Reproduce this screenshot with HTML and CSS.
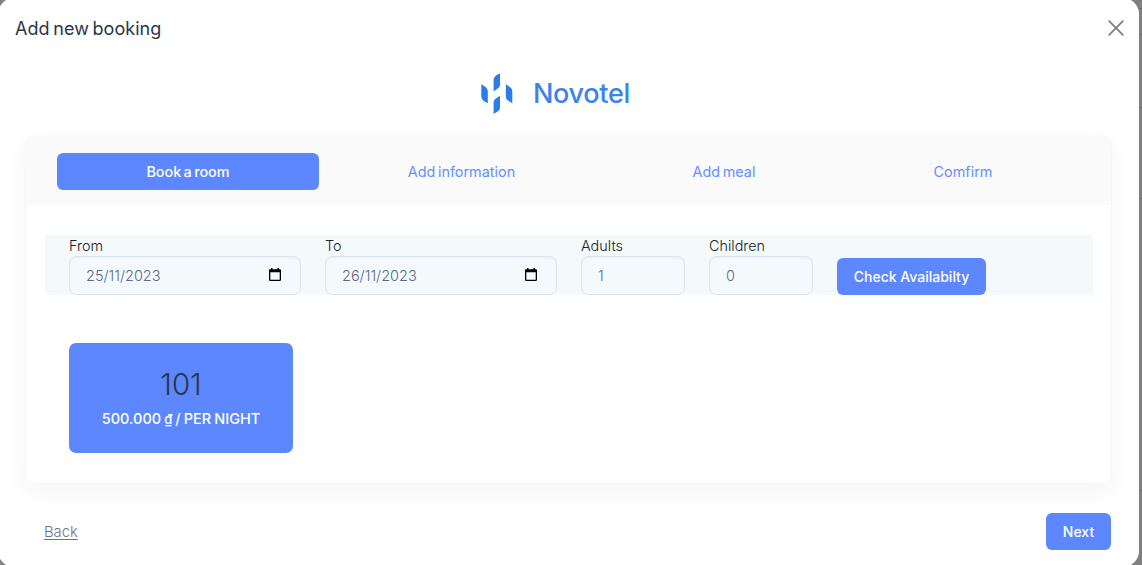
FILE: index.html
```html
<!DOCTYPE html>
<html lang="en">
<head>
<meta charset="utf-8">
<title>Add new booking</title>
<link rel="stylesheet" href="styles.css">
</head>
<body>
<main class="modal">
  <header class="modal-header">
    <h1 class="modal-title">Add new booking</h1>
    <button class="close" aria-label="Close"><svg width="16" height="16" viewBox="0 0 16 16"><path d="M1.2 1.2 14.8 14.8M14.8 1.2 1.2 14.8"/></svg></button>
  </header>
  <div class="brand">
    <svg class="brand-mark" width="32" height="42" viewBox="0 0 32 42"><path d="M0.3 11.2 4.5 13.9Q6.8 15.6 6.8 18V30.2L3 28.2Q.3 26.2.3 23.5ZM12.6 18.4V7.2Q12.6 4.5 15 2.6L19 .2V12Q19 13.8 17.4 15ZM12.6 41V29.5Q12.6 27.2 14.5 25.7L19 22.8V34.5Q19 36.8 17 38.3ZM24.8 11.2 28.6 13.8Q31.3 15.6 31.3 18.5V30.2L27 27.5Q24.8 26 24.8 23.5Z"/></svg>
    <span class="brand-name">Novotel</span>
  </div>
  <section class="card">
    <nav class="tabs">
      <a class="tab tab-room active"><span>Book a room</span></a>
      <a class="tab tab-info"><span>Add information</span></a>
      <a class="tab tab-meal"><span>Add meal</span></a>
      <a class="tab tab-confirm"><span>Comfirm</span></a>
    </nav>
    <div class="card-body">
      <form class="filters">
        <label class="field date"><span class="label">From</span>
          <span class="control"><span class="date-value">25/11/2023</span><svg class="calendar" width="12" height="13" viewBox="0 0 12 13"><path fill-rule="evenodd" d="M2 0H3.5V1.2H8.5V0H10V1.2H10.8Q12 1.2 12 2.3V11.8Q12 13 10.8 13H1.2Q0 13 0 11.8V2.3Q0 1.2 1.2 1.2H2ZM1.3 4.3V11.7H10.7V4.3Z"/></svg></span></label>
        <label class="field date"><span class="label">To</span>
          <span class="control"><span class="date-value">26/11/2023</span><svg class="calendar" width="12" height="13" viewBox="0 0 12 13"><path fill-rule="evenodd" d="M2 0H3.5V1.2H8.5V0H10V1.2H10.8Q12 1.2 12 2.3V11.8Q12 13 10.8 13H1.2Q0 13 0 11.8V2.3Q0 1.2 1.2 1.2H2ZM1.3 4.3V11.7H10.7V4.3Z"/></svg></span></label>
        <label class="field count"><span class="label">Adults</span><span class="control">1</span></label>
        <label class="field count"><span class="label">Children</span><span class="control">0</span></label>
        <button type="button" class="btn check">Check Availabilty</button>
      </form>
      <article class="room">
        <h2 class="room-number">101</h2>
        <p class="room-price">500.000 <span class="currency">₫</span> / PER NIGHT</p>
      </article>
    </div>
  </section>
  <footer class="modal-footer">
    <a class="back">Back</a>
    <button class="btn next">Next</button>
  </footer>
</main>
</body>
</html>
```
FILE: styles.css
```css
* { box-sizing: border-box; }
body {
  margin: 0;
  height: 565px;
  overflow: hidden;
  background:
    linear-gradient(#6c6c6c, #6c6c6c) right 8px / 12px 1px no-repeat,
    linear-gradient(#6c6c6c, #6c6c6c) right 34px / 12px 1px no-repeat,
    linear-gradient(#6c6c6c, #6c6c6c) right 107px / 12px 1px no-repeat,
    linear-gradient(#6c6c6c, #6c6c6c) right 198px / 12px 1px no-repeat,
    linear-gradient(#6c6c6c, #6c6c6c) right 490px / 12px 1px no-repeat,
    #808080;
  font-family: Inter, "Noto Sans", sans-serif;
  font-size: 14px;
  color: #222;
}
h1, h2, p { margin: 0; font-weight: 400; }
button { border: 0; padding: 0; font: inherit; }
.modal {
  width: 1141px;
  height: 569px;
  margin: -2px 0 0 -2px;
  padding: 2px 0 0 2px;
  border-radius: 16px;
  background: #fff;
  overflow: hidden;
}
.modal-header {
  display: flex;
  justify-content: space-between;
  align-items: center;
  height: 57px;
  padding: 0 15px;
}
.modal-title { font-size: 18px; line-height: 24px; word-spacing: -1.5px; letter-spacing: .05px; color: #2a3547; }
.close { width: 16px; height: 16px; margin-top: -2px; background: none; }
.close svg { display: block; fill: none; stroke: #7d7d7d; stroke-width: 1.7; stroke-linecap: round; }
.brand { display: flex; align-items: center; gap: 20px; height: 80px; padding: 0 0 6px 481px; }
.brand-mark { fill: #2b7be9; }
.brand-name { font-size: 27px; font-weight: 500; line-height: 34px; letter-spacing: -.3px; color: #3b82ed; }
.card {
  width: 1085px;
  height: 346px;
  margin-left: 26px;
  border-radius: 7px;
  box-shadow: 0 0 2px rgba(40, 50, 70, .08), 0 8px 24px rgba(40, 50, 70, .05);
}
.tabs {
  display: flex;
  height: 68px;
  padding: 16px 29px 15px 31px;
  border-radius: 7px 7px 0 0;
  background: #fafafa;
}
.tab {
  display: flex;
  flex: none;
  align-items: center;
  justify-content: center;
  border-radius: 6px;
  color: #668fff;
  font-size: 14.4px;
  word-spacing: -1.5px;
}
.tab-room { width: 262px; }
.tab-info { width: 285px; }
.tab-meal { width: 240px; }
.tab-confirm { width: 238px; }
.tab.active { background: #5d87ff; color: #fff; font-size: 14.4px; font-weight: 450; }
.card-body { padding: 30px 18px 30px 19px; }
.filters {
  display: flex;
  gap: 24px;
  align-items: flex-end;
  height: 60px;
  padding-left: 24px;
  background: #f4f9fc;
}
.field { display: flex; flex-direction: column; }
.date { width: 232px; }
.count { width: 104px; }
.label { height: 21px; line-height: 22px; font-size: 14.4px; font-weight: 300; }
.control {
  display: flex;
  align-items: center;
  justify-content: space-between;
  height: 39px;
  padding: 0 19px 0 16px;
  border: 1px solid #dde3ee;
  border-radius: 7px;
  box-shadow: inset 0 1px 2px rgba(60, 80, 120, .06);
  color: #5a6a85;
  font-size: 14.5px;
  font-weight: 300;
}
.calendar { fill: #000; margin-top: -3px; }
.btn { height: 37px; border-radius: 6px; background: #5d87ff; color: #fff; font-weight: 500; }
.check { width: 149px; }
.room {
  width: 224px;
  height: 110px;
  margin: 48px 0 0 24px;
  padding-top: 22px;
  border-radius: 7px;
  background: #5d87ff;
  text-align: center;
}
.room-number { font-size: 29.5px; line-height: 39px; font-weight: 350; color: #2a3547; }
.room-price { line-height: 30px; font-size: 14.5px; font-weight: 500; word-spacing: -.8px; color: #fff; }
.currency { font-size: 13px; }
.modal-footer {
  display: flex;
  align-items: center;
  justify-content: space-between;
  margin-top: 30px;
  padding: 0 28px 0 44px;
}
.back { color: #6b7485; text-decoration: underline; text-underline-offset: 2px; font-size: 14.8px; font-weight: 300; }
.next { width: 65px; }
```
